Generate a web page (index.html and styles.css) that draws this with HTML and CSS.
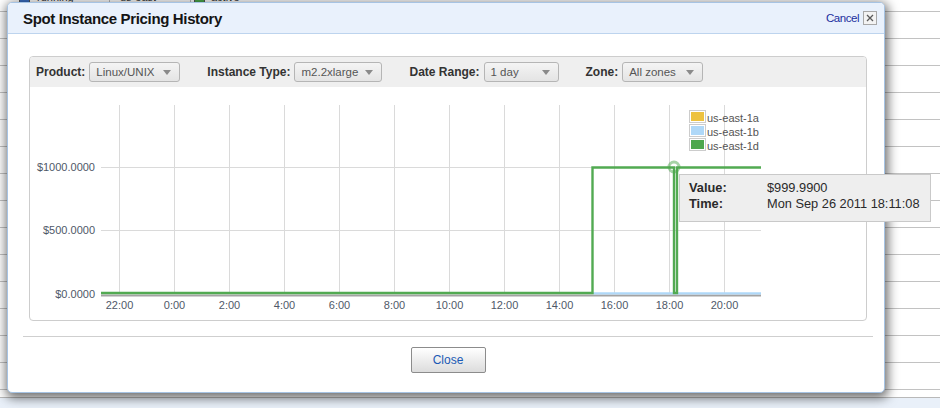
FILE: index.html
```html
<!DOCTYPE html>
<html>
<head>
<meta charset="utf-8">
<title>Spot Instance Pricing History</title>
<link rel="stylesheet" href="styles.css">
</head>
<body>
<div class="page">
  <div class="row head">
    <span class="ico ico-blue"></span>
    <span class="cell c1">i-3bc4e2a1 running</span>
    <span class="sep"></span>
    <span class="cell c2">m2.2xlarge us-east</span>
    <span class="sep"></span>
    <span class="ico ico-green"></span>
    <span class="cell c3">active</span>
  </div>
  <div class="row"></div><div class="row"></div><div class="row"></div><div class="row"></div>
  <div class="row"></div><div class="row"></div><div class="row"></div><div class="row"></div>
  <div class="row"></div><div class="row"></div><div class="row"></div><div class="row"></div>
  <div class="row"></div><div class="row"></div>
  <div class="foot"></div>
</div>

<div class="dialog">
  <div class="titlebar">
    <h1 class="title">Spot Instance Pricing History</h1>
    <a class="cancel">Cancel</a>
    <span class="xbtn"><svg width="8" height="8" viewBox="0 0 8 8"><path class="xglyph" d="M1 1L7 7M7 1L1 7"/></svg></span>
  </div>

  <div class="panel">
    <div class="toolbar">
      <div class="field"><span class="lbl">Product:</span><span class="select s-product">Linux/UNIX<i class="arrow"></i></span></div>
      <div class="field"><span class="lbl">Instance Type:</span><span class="select s-type">m2.2xlarge<i class="arrow"></i></span></div>
      <div class="field"><span class="lbl">Date Range:</span><span class="select s-range">1 day<i class="arrow"></i></span></div>
      <div class="field"><span class="lbl">Zone:</span><span class="select s-zone">All zones<i class="arrow"></i></span></div>
    </div>
    <svg class="chart" width="836" height="233" viewBox="30 87 836 233">
      <g class="grid">
        <line x1="101" y1="167.5" x2="761" y2="167.5"/>
        <line x1="101" y1="230.5" x2="761" y2="230.5"/>
        <line x1="101" y1="293.5" x2="761" y2="293.5"/>
        <line x1="119.5" y1="105" x2="119.5" y2="294"/>
        <line x1="174.5" y1="105" x2="174.5" y2="294"/>
        <line x1="229.5" y1="105" x2="229.5" y2="294"/>
        <line x1="284.5" y1="105" x2="284.5" y2="294"/>
        <line x1="339.5" y1="105" x2="339.5" y2="294"/>
        <line x1="394.5" y1="105" x2="394.5" y2="294"/>
        <line x1="449.5" y1="105" x2="449.5" y2="294"/>
        <line x1="504.5" y1="105" x2="504.5" y2="294"/>
        <line x1="559.5" y1="105" x2="559.5" y2="294"/>
        <line x1="614.5" y1="105" x2="614.5" y2="294"/>
        <line x1="669.5" y1="105" x2="669.5" y2="294"/>
        <line x1="724.5" y1="105" x2="724.5" y2="294"/>
      </g>
      <text class="ylab" x="95" y="171">$1000.0000</text>
      <text class="ylab" x="95" y="234">$500.0000</text>
      <text class="ylab" x="95" y="297.5">$0.0000</text>
      <text class="xlab" x="119.5" y="309">22:00</text>
      <text class="xlab" x="174.5" y="309">0:00</text>
      <text class="xlab" x="229.5" y="309">2:00</text>
      <text class="xlab" x="284.5" y="309">4:00</text>
      <text class="xlab" x="339.5" y="309">6:00</text>
      <text class="xlab" x="394.5" y="309">8:00</text>
      <text class="xlab" x="449.5" y="309">10:00</text>
      <text class="xlab" x="504.5" y="309">12:00</text>
      <text class="xlab" x="559.5" y="309">14:00</text>
      <text class="xlab" x="614.5" y="309">16:00</text>
      <text class="xlab" x="669.5" y="309">18:00</text>
      <text class="xlab" x="724.5" y="309">20:00</text>

      <path class="shadow-line" d="M101 295.5H761"/>
      <path class="s-1b" d="M593 293.3H761"/>
      <path class="s-1d" d="M101 293H592.5V167.5H674V293H677V167.5H761"/>
      <circle class="hl" cx="674" cy="167" r="5"/>

      <g class="legend">
        <rect class="sw-box" x="689.5" y="110.5" width="16" height="12"/>
        <rect class="sw-1a" x="691" y="112" width="13" height="9"/>
        <text class="leg" x="707" y="121.5">us-east-1a</text>
        <rect class="sw-box" x="689.5" y="124.5" width="16" height="12"/>
        <rect class="sw-1b" x="691" y="126" width="13" height="9"/>
        <text class="leg" x="707" y="135.5">us-east-1b</text>
        <rect class="sw-box" x="689.5" y="138.5" width="16" height="12"/>
        <rect class="sw-1d" x="691" y="140" width="13" height="9"/>
        <text class="leg" x="707" y="149.5">us-east-1d</text>
      </g>
    </svg>
  </div>

  <div class="footer">
    <button class="close-btn">Close</button>
  </div>
</div>

<div class="tooltip">
  <div class="tip-row"><span class="tip-k">Value:</span><span class="tip-v">$999.9900</span></div>
  <div class="tip-row"><span class="tip-k">Time:</span><span class="tip-v">Mon Sep 26 2011 18:11:08</span></div>
</div>
</body>
</html>
```

FILE: styles.css
```css
* { box-sizing: border-box; }
html, body { margin: 0; padding: 0; }
body {
  font-family: "Liberation Sans", Arial, sans-serif;
  background: #fff;
  width: 940px;
  height: 408px;
  overflow: hidden;
  position: relative;
}

/* background page */
.page { margin-top: -15px; }
.row { height: 27px; border-bottom: 1px solid #c2c2c2; }
.head {
  display: flex;
  align-items: flex-end;
  padding: 0 0 8px 19px;
  font-size: 11px;
  line-height: 12px;
  color: #333;
}
.ico { width: 11px; height: 11px; border: 1px solid #555; }
.ico-blue { background: #3b6fc4; }
.ico-green { background: #4aa84a; margin-left: 3px; }
.cell { margin-left: 7px; }
.c1 { width: 72px; }
.c2 { width: 70px; margin-left: 10px; }
.c3 { margin-left: 6px; }
.sep { width: 1px; height: 12px; background: #bbb; }
.foot {
  margin-top: 7px;
  border-top: 1px solid #b9b9b9;
  background: #e9f0f9;
  height: 20px;
}

/* dialog */
.dialog {
  position: absolute;
  left: 7px;
  top: 2px;
  width: 878px;
  height: 391px;
  background: #fff;
  border: 1px solid #a6c3e3;
  border-radius: 5px;
  box-shadow: 1px 3px 11px 2px rgba(0, 0, 0, 0.58);
}
.titlebar {
  height: 31px;
  background: #e9f1fc;
  border-bottom: 1px solid #bdd4ee;
  border-radius: 4px 4px 0 0;
  display: flex;
  align-items: center;
  padding: 0 7px 0 15px;
}
.title {
  margin: 0;
  flex: 1;
  font-size: 15px;
  font-weight: bold;
  letter-spacing: -0.35px;
  color: #141414;
}
.cancel {
  color: #1c2f9e;
  font-size: 11.5px;
  letter-spacing: -0.45px;
  margin-right: 4px;
}
.xbtn {
  width: 14px;
  height: 14px;
  border: 1px solid #a8a8a8;
  background: #f3f3f3;
  display: flex;
  align-items: center;
  justify-content: center;
}
.xglyph { stroke: #5a5a5a; stroke-width: 1.3; fill: none; }

.panel {
  margin: 22px 17px 0 21px;
  height: 265px;
  border: 1px solid #cdcdcd;
  border-radius: 4px;
  overflow: hidden;
}
.toolbar {
  height: 30px;
  background: #efefef;
  display: flex;
  align-items: center;
  padding-left: 6px;
}
.field {
  display: flex;
  align-items: center;
  gap: 4px;
  margin-right: 27px;
}
.lbl {
  font-size: 12px;
  font-weight: bold;
  color: #333;
}
.select {
  height: 20px;
  border: 1px solid #b5b5b5;
  border-radius: 3px;
  background: linear-gradient(#f4f4f4, #e4e4e4);
  font-size: 11.5px;
  color: #555;
  display: flex;
  align-items: center;
  justify-content: space-between;
  padding: 0 8px 0 6px;
}
.s-product { width: 91px; }
.s-type { width: 88px; }
.s-range { width: 75px; }
.s-zone { width: 81px; }
.arrow {
  width: 0;
  height: 0;
  border-left: 4px solid transparent;
  border-right: 4px solid transparent;
  border-top: 5px solid #8a8a8a;
}

.chart { display: block; }
.grid line { stroke: #dadada; stroke-width: 1; }
.ylab {
  font-family: "Liberation Sans", Arial, sans-serif;
  font-size: 11px;
  fill: #4f5868;
  text-anchor: end;
}
.xlab {
  font-family: "Liberation Sans", Arial, sans-serif;
  font-size: 11px;
  fill: #4f5868;
  text-anchor: middle;
}
.shadow-line { stroke: #a3a3a3; stroke-width: 2; fill: none; }
.s-1b { stroke: #afd8f8; stroke-width: 2.2; fill: none; }
.s-1d { stroke: #52aa52; stroke-width: 2.4; fill: none; }
.hl { fill: none; stroke: rgba(77, 167, 77, 0.5); stroke-width: 3; }
.sw-box { fill: #fff; stroke: #cccccc; stroke-width: 1; }
.sw-1a { fill: #edc240; }
.sw-1b { fill: #afd8f8; }
.sw-1d { fill: #4da74d; }
.leg {
  font-family: "Liberation Sans", Arial, sans-serif;
  font-size: 11px;
  fill: #545454;
}

.footer {
  margin: 15px 11px 0 15px;
  border-top: 1px solid #cfcfcf;
  padding-top: 10px;
  display: flex;
  justify-content: center;
}
.close-btn {
  width: 75px;
  height: 26px;
  border: 1px solid #8c8c8c;
  border-radius: 2px;
  background: linear-gradient(#ffffff, #dcdcdc);
  font-family: "Liberation Sans", Arial, sans-serif;
  font-size: 12px;
  color: #1a5ab5;
  padding: 0;
}

/* hover tooltip */
.tooltip {
  position: absolute;
  left: 679px;
  top: 174px;
  width: 252px;
  height: 48px;
  background: #eeeeee;
  border: 1px solid #c9c9c9;
  padding: 5px 0 0 9px;
  font-size: 12.8px;
  line-height: 16px;
  color: #2a2a2a;
}
.tip-row { display: flex; }
.tip-k { width: 78px; font-weight: bold; }
```
